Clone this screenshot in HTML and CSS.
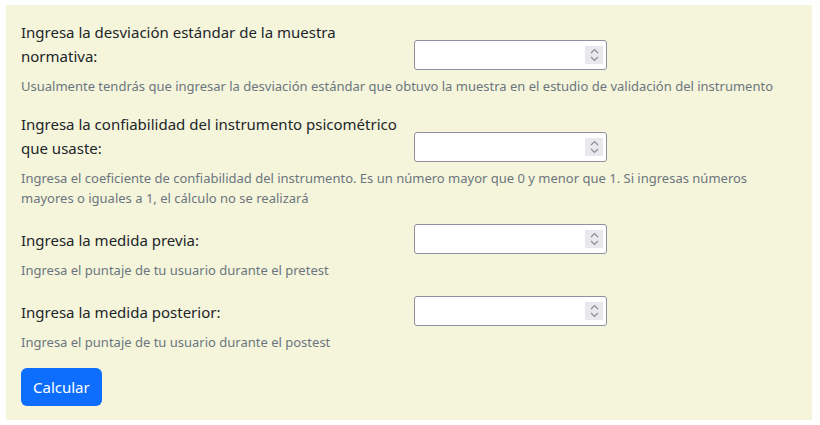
FILE: index.html
```html
<!DOCTYPE html>
<html lang="es">
<head>
<meta charset="utf-8">
<title>Calculadora</title>
<link rel="stylesheet" href="styles.css">
</head>
<body>
<form class="panel">
  <div class="group">
    <div class="row">
      <label class="label" for="de">Ingresa la desviación estándar de la muestra normativa:</label>
      <div class="num"><input id="de" type="text"><span class="spin"><svg width="9" height="14" viewBox="0 0 9 14"><path d="M1 5 L4.5 1.5 L8 5 M1 9 L4.5 12.5 L8 9" fill="none" stroke="#8c8c99" stroke-width="1.2"/></svg></span></div>
    </div>
    <div class="help">Usualmente tendrás que ingresar la desviación estándar que obtuvo la muestra en el estudio de validación del instrumento</div>
  </div>
  <div class="group">
    <div class="row">
      <label class="label" for="cf">Ingresa la confiabilidad del instrumento psicométrico que usaste:</label>
      <div class="num"><input id="cf" type="text"><span class="spin"><svg width="9" height="14" viewBox="0 0 9 14"><path d="M1 5 L4.5 1.5 L8 5 M1 9 L4.5 12.5 L8 9" fill="none" stroke="#8c8c99" stroke-width="1.2"/></svg></span></div>
    </div>
    <div class="help">Ingresa el coeficiente de confiabilidad del instrumento. Es un número mayor que 0 y menor que 1. Si ingresas números mayores o iguales a 1, el cálculo no se realizará</div>
  </div>
  <div class="group">
    <div class="row">
      <label class="label" for="pre">Ingresa la medida previa:</label>
      <div class="num"><input id="pre" type="text"><span class="spin"><svg width="9" height="14" viewBox="0 0 9 14"><path d="M1 5 L4.5 1.5 L8 5 M1 9 L4.5 12.5 L8 9" fill="none" stroke="#8c8c99" stroke-width="1.2"/></svg></span></div>
    </div>
    <div class="help">Ingresa el puntaje de tu usuario durante el pretest</div>
  </div>
  <div class="group">
    <div class="row">
      <label class="label" for="post">Ingresa la medida posterior:</label>
      <div class="num"><input id="post" type="text"><span class="spin"><svg width="9" height="14" viewBox="0 0 9 14"><path d="M1 5 L4.5 1.5 L8 5 M1 9 L4.5 12.5 L8 9" fill="none" stroke="#8c8c99" stroke-width="1.2"/></svg></span></div>
    </div>
    <div class="help">Ingresa el puntaje de tu usuario durante el postest</div>
  </div>
  <button class="btn" type="button">Calcular</button>
</form>
</body>
</html>
```

FILE: styles.css
```css
html, body {
  margin: 0;
  background: #ffffff;
}
body {
  font-family: "Noto Sans", "Open Sans", sans-serif;
  color: #212529;
}
.panel {
  box-sizing: border-box;
  width: 806px;
  height: 415px;
  margin: 5px 0 0 6px;
  padding: 15px 15px;
  background: #f5f5dc;
}
.group {
  margin-bottom: 16px;
}
.row {
  display: flex;
  align-items: flex-end;
}
.label {
  box-sizing: border-box;
  width: 393px;
  padding-right: 12px;
  padding-bottom: 2px;
  font-size: 15px;
  line-height: 24px;
  color: #212529;
}
.num {
  box-sizing: border-box;
  width: 193px;
  height: 30px;
  border: 1px solid #8f8f9d;
  border-radius: 3px;
  background: #ffffff;
  display: flex;
  align-items: center;
  padding-right: 3px;
}
.num input {
  flex: 1;
  min-width: 0;
  height: 100%;
  border: 0;
  outline: 0;
  background: transparent;
  padding: 0 6px;
  font: inherit;
}
.spin {
  width: 18px;
  height: 18px;
  background: #e9e9ed;
  display: flex;
  align-items: center;
  justify-content: center;
}
.help {
  margin-top: 6px;
  font-size: 13px;
  line-height: 20px;
  color: #6c757d;
}
.btn {
  box-sizing: border-box;
  height: 38px;
  padding: 0 12px;
  border: 0;
  border-radius: 6px;
  background: #0d6efd;
  color: #ffffff;
  font-family: "Noto Sans", "Open Sans", sans-serif;
  font-size: 15px;
}
```
